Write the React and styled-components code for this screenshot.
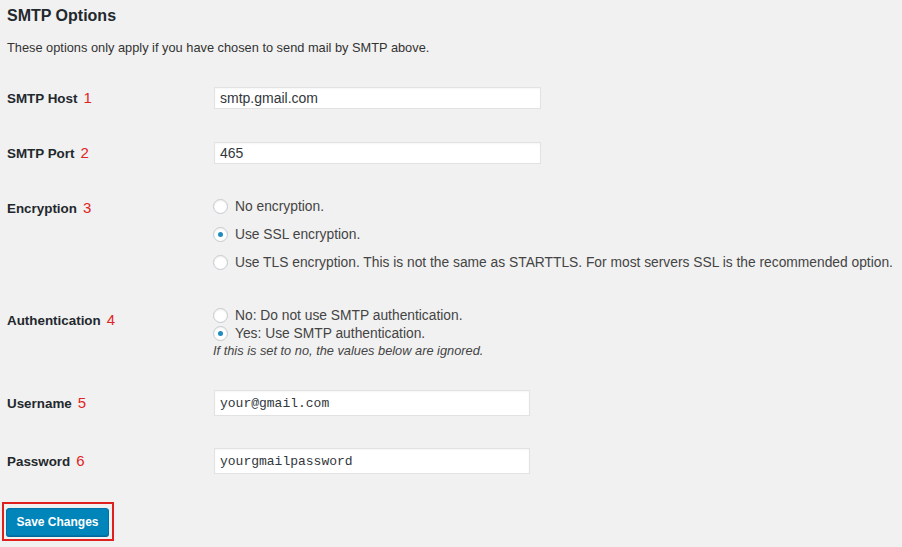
import React, { useState } from "react";
import styled, { createGlobalStyle } from "styled-components";

const GlobalStyle = createGlobalStyle`
  html, body {
    margin: 0;
    padding: 0;
    background: #f1f1f1;
  }
  body {
    font-family: "Liberation Sans", Arial, sans-serif;
    color: #23282d;
  }
`;

const Page = styled.div`
  width: 902px;
  height: 547px;
  padding: 0 7px;
  box-sizing: border-box;
  overflow: hidden;
`;

const Title = styled.h2`
  margin: 6px 0 0;
  font-size: 16px;
  line-height: 20px;
  font-weight: 700;
  color: #23282d;
`;

const Description = styled.p`
  margin: 14px 0 0;
  font-size: 12.8px;
  line-height: 16px;
  color: #333;
`;

const Row = styled.div`
  display: grid;
  grid-template-columns: 206px 1fr;
  align-items: ${(p) => (p.$top ? "start" : "center")};
  margin-top: ${(p) => p.$gap}px;
`;

const Label = styled.div`
  font-size: 13.4px;
  font-weight: 700;
  line-height: 18px;
  color: #23282d;
  padding-top: ${(p) => p.$offset || 0}px;
  white-space: nowrap;
`;

const Marker = styled.span`
  color: #e02424;
  font-weight: 400;
  font-size: 15px;
  margin-left: 6px;
`;

const TextInput = styled.input`
  box-sizing: border-box;
  width: ${(p) => p.$width}px;
  height: ${(p) => p.$height}px;
  margin-left: 1px;
  padding: 0 5px;
  border: 1px solid #e2e2e2;
  box-shadow: inset 0 1px 2px rgba(0, 0, 0, 0.04);
  background: #fff;
  color: #32373c;
  font-family: ${(p) =>
    p.$mono ? '"Liberation Mono", "DejaVu Sans Mono", monospace' : '"Liberation Sans", Arial, sans-serif'};
  font-size: ${(p) => (p.$mono ? 13 : 14)}px;
  outline: none;
`;

const Options = styled.div`
  display: flex;
  flex-direction: column;
`;

const Option = styled.label`
  display: flex;
  align-items: center;
  gap: 7px;
  height: ${(p) => p.$height}px;
  font-size: 13.8px;
  color: #444;
  white-space: nowrap;
  cursor: pointer;
`;

const Radio = styled.span`
  box-sizing: border-box;
  width: 15px;
  height: 15px;
  border-radius: 50%;
  border: 1px solid #c5c9cd;
  background: #fff;
  box-shadow: inset 0 1px 2px rgba(0, 0, 0, 0.07);
  display: flex;
  align-items: center;
  justify-content: center;
  flex-shrink: 0;

  &::after {
    content: "";
    width: 5px;
    height: 5px;
    border-radius: 50%;
    background: ${(p) => (p.$checked ? "#1e8cbe" : "transparent")};
  }
`;

const Note = styled.div`
  height: 18px;
  line-height: 18px;
  font-size: 12.8px;
  font-style: italic;
  color: #444;
`;

const Highlight = styled.div`
  display: inline-block;
  margin: 28px 0 0 -5px;
  padding: 4px 3px 3px 2px;
  border: 2px solid #e0201e;
`;

const SaveButton = styled.button`
  display: block;
  width: 103px;
  height: 28px;
  padding: 0;
  border: 1px solid #0073aa;
  border-radius: 3px;
  background: #0085ba;
  box-shadow: 0 1px 0 #006799;
  color: #fff;
  font-family: "Liberation Sans", Arial, sans-serif;
  font-size: 12px;
  font-weight: 700;
  cursor: pointer;
`;

const encryptionOptions = [
  { id: "none", text: "No encryption." },
  { id: "ssl", text: "Use SSL encryption." },
  {
    id: "tls",
    text: "Use TLS encryption. This is not the same as STARTTLS. For most servers SSL is the recommended option.",
  },
];

const authOptions = [
  { id: "no", text: "No: Do not use SMTP authentication." },
  { id: "yes", text: "Yes: Use SMTP authentication." },
];

const RadioGroup = ({ options, value, onChange, height }) => (
  <>
    {options.map((o) => (
      <Option key={o.id} $height={height} onClick={() => onChange(o.id)}>
        <Radio $checked={value === o.id} />
        {o.text}
      </Option>
    ))}
  </>
);

export default function App() {
  const [encryption, setEncryption] = useState("ssl");
  const [auth, setAuth] = useState("yes");

  return (
    <Page>
      <GlobalStyle />
      <Title>SMTP Options</Title>
      <Description>These options only apply if you have chosen to send mail by SMTP above.</Description>

      <Row $gap={31}>
        <Label>SMTP Host<Marker>1</Marker></Label>
        <TextInput $width={327} $height={22} defaultValue="smtp.gmail.com" />
      </Row>

      <Row $gap={33}>
        <Label>SMTP Port<Marker>2</Marker></Label>
        <TextInput $width={327} $height={22} defaultValue="465" />
      </Row>

      <Row $gap={28} $top>
        <Label $offset={7}>Encryption<Marker>3</Marker></Label>
        <Options>
          <RadioGroup options={encryptionOptions} value={encryption} onChange={setEncryption} height={28} />
        </Options>
      </Row>

      <Row $gap={30} $top>
        <Label $offset={5}>Authentication<Marker>4</Marker></Label>
        <Options>
          <RadioGroup options={authOptions} value={auth} onChange={setAuth} height={18} />
          <Note>If this is set to no, the values below are ignored.</Note>
        </Options>
      </Row>

      <Row $gap={30}>
        <Label>Username<Marker>5</Marker></Label>
        <TextInput $width={316} $height={26} $mono defaultValue="your@gmail.com" />
      </Row>

      <Row $gap={32}>
        <Label>Password<Marker>6</Marker></Label>
        <TextInput $width={316} $height={26} $mono defaultValue="yourgmailpassword" />
      </Row>

      <Highlight>
        <SaveButton>Save Changes</SaveButton>
      </Highlight>
    </Page>
  );
}
